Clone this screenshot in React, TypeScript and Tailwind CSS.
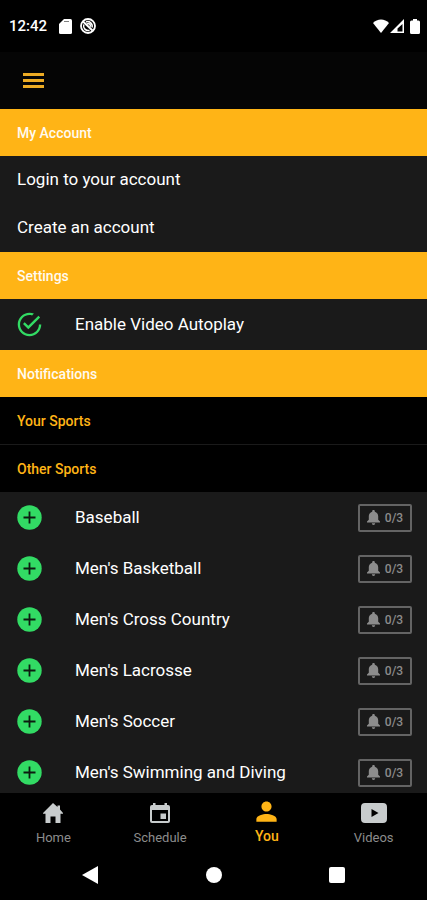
import { useState } from "react";
import { IoMdCheckmarkCircleOutline, IoMdPerson } from "react-icons/io";

const sports = [
  "Baseball",
  "Men's Basketball",
  "Men's Cross Country",
  "Men's Lacrosse",
  "Men's Soccer",
  "Men's Swimming and Diving",
];

const tabs = [
  { href: "#home", label: "Home", icon: <HomeIcon /> },
  { href: "#schedule", label: "Schedule", icon: <CalendarIcon /> },
  { href: "#you", label: "You", icon: <IoMdPerson size={27} />, active: true },
  { href: "#videos", label: "Videos", icon: <VideoIcon /> },
];

function HomeIcon() {
  return (
    <svg width="20" height="20" viewBox="0 0 20 20" fill="currentColor">
      <path d="M10 0l4.500 4V2.500H17v4L20 10v.8h-2.500V20H12.500v-6.500h-5V20h-5v-9.200H0V10z" />
    </svg>
  );
}

function CalendarIcon() {
  return (
    <svg width="20" height="20" viewBox="0 0 20 20" fill="currentColor">
      <path
        fillRule="evenodd"
        d="M3 0h2.500v2h9V0H17v2h1a2 2 0 0 1 2 2v14a2 2 0 0 1-2 2H2a2 2 0 0 1-2-2V4a2 2 0 0 1 2-2h1zM2 7v11h16V7z"
      />
      <path d="M10.500 10.500H16V16h-5.500z" />
    </svg>
  );
}

function VideoIcon() {
  return (
    <svg width="26" height="20" viewBox="0 0 26 20" fill="currentColor">
      <path
        fillRule="evenodd"
        d="M4 0h18a4 4 0 0 1 4 4v12a4 4 0 0 1-4 4H4a4 4 0 0 1-4-4V4a4 4 0 0 1 4-4zm6.500 6v8l7-4z"
      />
    </svg>
  );
}

function AddIcon() {
  return (
    <svg width="25" height="25" viewBox="0 0 25 25">
      <circle cx="12.500" cy="12.500" r="12.200" fill="#32db64" />
      <path d="M12.500 6.500v12M6.500 12.500h12" stroke="#0c1c10" strokeWidth="1.800" />
    </svg>
  );
}

function BellIcon() {
  return (
    <svg width="13" height="15" viewBox="0 0 13 15" fill="currentColor">
      <path d="M6.500 0c.8 0 1.300.5 1.300 1.200v.5C10 2.300 11.200 4 11.200 6.200v3.600L13 11.500v1H0v-1l1.800-1.700V6.200C1.800 4 3 2.300 5.200 1.700v-.5C5.200.5 5.700 0 6.500 0zM4.800 13.200h3.400a1.700 1.700 0 0 1-3.400 0z" />
    </svg>
  );
}

function StatusBar() {
  return (
    <div className="flex h-[52px] shrink-0 items-center pr-[7px] pl-[9px] text-white">
      <span className="text-[15px] font-medium">12:42</span>
      <svg className="ml-3" width="13" height="15" viewBox="0 0 13 15">
        <path
          fill="currentColor"
          d="M5 0h6.500A1.500 1.500 0 0 1 13 1.500v12a1.500 1.500 0 0 1-1.500 1.500h-10A1.500 1.500 0 0 1 0 13.500V5z"
        />
        <path stroke="#000" strokeOpacity="0.500" d="M5 2.500h5" />
      </svg>
      <svg
        className="ml-2"
        width="16"
        height="16"
        viewBox="0 0 16 16"
        fill="none"
        stroke="currentColor"
      >
        <circle cx="8" cy="8" r="7" strokeWidth="1.800" />
        <path strokeWidth="2" d="M3 3.500l9.500 9" />
        <path
          strokeWidth="1.500"
          d="M6 4a4.500 4.500 0 0 1 6 5.500M3.800 6.500a4.500 4.500 0 0 0 5.700 5.700M7 6.200a2 2 0 0 1 3 2.600"
        />
      </svg>
      <div className="ml-auto flex items-center">
        <svg width="16" height="14" viewBox="0 0 16 14" fill="currentColor">
          <path d="M8 14 0 4C4-.7 12-.7 16 4z" />
        </svg>
        <svg className="ml-px" width="14" height="14" viewBox="0 0 14 14">
          <path fill="currentColor" fillRule="evenodd" d="M14 0v14H0zM12.500 5v7.500H7.500V9.500z" />
        </svg>
        <svg className="ml-[6px]" width="10" height="15" viewBox="0 0 10 15" fill="currentColor">
          <path d="M3 0h4v1.500h1.500A1.500 1.500 0 0 1 10 3v10.500A1.500 1.500 0 0 1 8.500 15h-7A1.500 1.500 0 0 1 0 13.500V3a1.500 1.500 0 0 1 1.500-1.500H3z" />
        </svg>
      </div>
    </div>
  );
}

function SectionTitle({ children }: { children: string }) {
  return (
    <h2 className="flex h-[47px] items-center bg-[#ffb416] px-[17px] text-sm font-medium text-[#fffaf0]">
      {children}
    </h2>
  );
}

function SubTitle({ children }: { children: string }) {
  return (
    <h3 className="flex h-[47px] items-center bg-black px-[17px] text-sm font-medium text-[#ffb416]">
      {children}
    </h3>
  );
}

function SportRow({ name }: { name: string }) {
  return (
    <li className="flex h-[51px] items-center pr-[15px] pl-[17px]">
      <button type="button" aria-label={`Add ${name}`} className="mr-[33px]">
        <AddIcon />
      </button>
      <span className="flex-1">{name}</span>
      <button
        type="button"
        className="flex h-[28px] w-[54px] items-center justify-center gap-[5px] rounded-xs border-2 border-[#646464] text-xs font-medium text-[#8c8c8c]"
      >
        <BellIcon />
        0/3
      </button>
    </li>
  );
}

export default function App() {
  const [autoplay, setAutoplay] = useState(true);

  return (
    <div className="flex h-screen flex-col bg-black font-[Roboto,sans-serif]">
      <StatusBar />
      <header className="flex h-[57px] shrink-0 items-center bg-[#050505] px-[23px]">
        <button type="button" aria-label="Menu" className="text-[#ecab24]">
          <svg width="21" height="15" viewBox="0 0 21 15" fill="currentColor">
            <path d="M0 0h21v3H0zM0 6h21v3H0zM0 12h21v3H0z" />
          </svg>
        </button>
      </header>

      <main className="min-h-0 flex-1 overflow-y-auto bg-[#1a1a1a] text-[17px] text-white [scrollbar-width:none]">
        <SectionTitle>My Account</SectionTitle>
        <a href="#login" className="flex h-12 items-center px-[17px]">
          Login to your account
        </a>
        <a href="#create" className="flex h-12 items-center px-[17px]">
          Create an account
        </a>

        <SectionTitle>Settings</SectionTitle>
        <label className="relative flex h-[51px] items-center px-[15px]">
          <input
            type="checkbox"
            className="sr-only"
            checked={autoplay}
            onChange={(e) => setAutoplay(e.target.checked)}
          />
          <IoMdCheckmarkCircleOutline
            size={29}
            className={autoplay ? "mr-[31px] text-[#32db64]" : "mr-[31px] text-[#646464]"}
          />
          Enable Video Autoplay
        </label>

        <SectionTitle>Notifications</SectionTitle>
        <SubTitle>Your Sports</SubTitle>
        <div className="h-px bg-[#1a1a1a]" />
        <SubTitle>Other Sports</SubTitle>
        <ul>
          {sports.map((name) => (
            <SportRow key={name} name={name} />
          ))}
        </ul>
      </main>

      <nav className="grid h-[57px] shrink-0 grid-cols-4">
        {tabs.map((tab) => (
          <a
            key={tab.label}
            href={tab.href}
            className={`flex flex-col items-center ${
              tab.active ? "text-sm font-medium text-[#ffb416]" : "text-[13px] text-[#8c8c8c]"
            }`}
          >
            <span
              className={`flex items-center pt-1 ${
                tab.active ? "h-[33px]" : "h-[35px] text-[#c8cccd]"
              }`}
            >
              {tab.icon}
            </span>
            {tab.label}
          </a>
        ))}
      </nav>

      <div className="flex h-[50px] shrink-0 items-center justify-center gap-[107px] text-white">
        <button type="button" aria-label="Back">
          <svg width="17" height="18" viewBox="0 0 17 18" fill="currentColor">
            <path d="M16 0v18L0 9z" />
          </svg>
        </button>
        <button type="button" aria-label="Home screen" className="size-4 rounded-full bg-white" />
        <button type="button" aria-label="Recent apps" className="size-4 rounded-xs bg-white" />
      </div>
    </div>
  );
}
